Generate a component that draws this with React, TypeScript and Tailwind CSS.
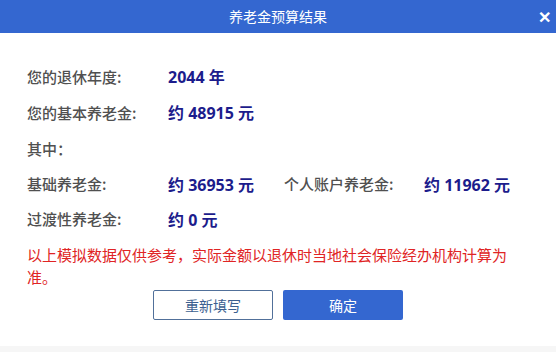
const font = { fontFamily: '"Noto Sans CJK SC", "Noto Sans", sans-serif' };
const numFont = { fontFamily: '"Open Sans", "Noto Sans CJK SC", sans-serif' };

function Row({ label, value, h = "h-[36px]" }: { label: string; value?: string; h?: string }) {
  return (
    <div className={`flex items-center ${h}`}>
      <span className="w-[141px] text-[15px] font-medium text-[#505050]">{label}</span>
      {value && (
        <span className="text-[16px] font-bold text-[#1c1c8c]" style={numFont}>
          {value}
        </span>
      )}
    </div>
  );
}

export default function App() {
  return (
    <div className="w-[556px] h-[352px] bg-white flex flex-col" style={font}>
      <div className="h-[33px] bg-[#3467d0] flex items-center justify-center relative">
        <span className="text-white text-[14px]">养老金预算结果</span>
        <span className="absolute right-[5px] top-[7px] text-white text-[16px] font-bold leading-[18px] w-[14px] text-center">✕</span>
      </div>
      <div className="flex-1 flex flex-col pl-[27px] pr-[20px] pt-[26px]">
        <Row label="您的退休年度:" value="2044 年" />
        <Row label="您的基本养老金:" value="约 48915 元" />
        <Row label="其中：" />
        <div className="flex items-center h-[35px]">
          <span className="w-[141px] text-[15px] font-medium text-[#505050]">基础养老金:</span>
          <span className="w-[116px] text-[16px] font-bold text-[#1c1c8c]" style={numFont}>约 36953 元</span>
          <span className="w-[140px] text-[15px] font-medium text-[#505050]">个人账户养老金:</span>
          <span className="text-[16px] font-bold text-[#1c1c8c]" style={numFont}>约 11962 元</span>
        </div>
        <Row label="过渡性养老金:" value="约 0 元" h="h-[35px]" />
        <p className="mt-[7px] text-[15px] leading-[22px] text-[#e02424]">
          以上模拟数据仅供参考，实际金额以退休时当地社会保险经办机构计算为准。
        </p>
      </div>
      <div className="flex justify-center gap-[10px] pb-[26px]">
        <button className="w-[120px] h-[30px] border border-[#51709a] rounded-[2px] bg-white text-[#3c5f90] text-[14px]">
          重新填写
        </button>
        <button className="w-[120px] h-[30px] rounded-[2px] bg-[#3467d0] text-white text-[14px]">
          确定
        </button>
      </div>
      <div className="h-[6px] bg-[#f6f6f6]" />
    </div>
  );
}
